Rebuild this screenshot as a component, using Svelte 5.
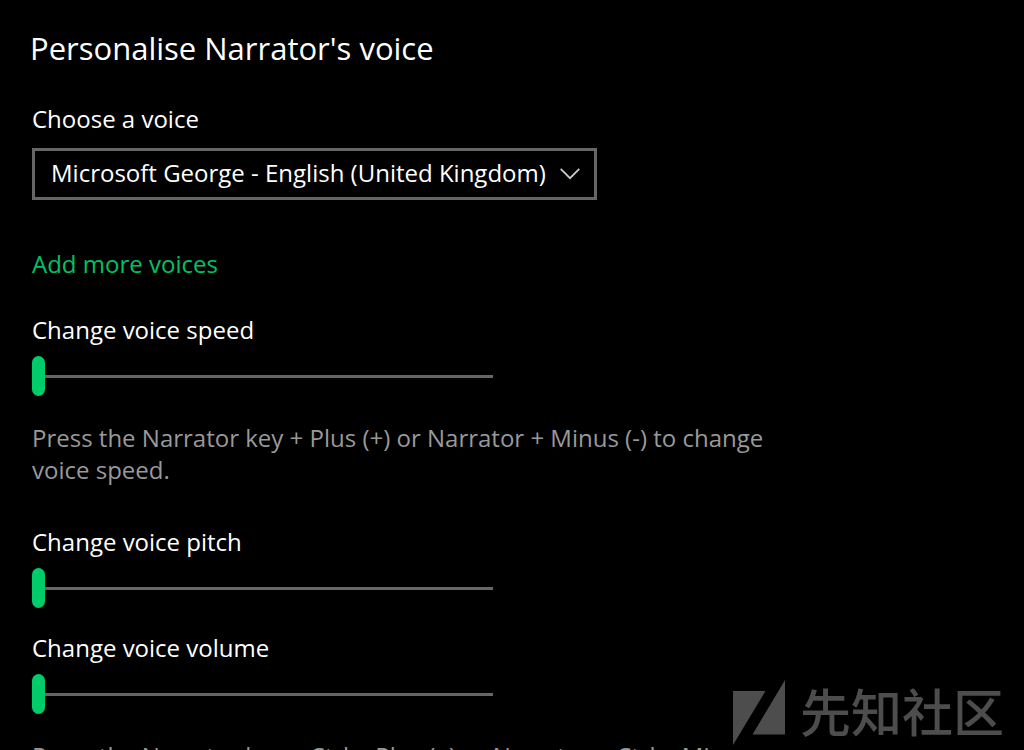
<script>
  const voices = ['Microsoft George - English (United Kingdom)'];
  let voice = $state(voices[0]);

  let sliders = $state([
    {
      id: 'speed',
      label: 'Change voice speed',
      value: 0,
      hint: 'Press the Narrator key + Plus (+) or Narrator + Minus (-) to change voice speed.'
    },
    { id: 'pitch', label: 'Change voice pitch', value: 0, hint: '' },
    {
      id: 'volume',
      label: 'Change voice volume',
      value: 0,
      hint: 'Press the Narrator key + Ctrl + Plus (+) or Narrator + Ctrl + Minus (-) to change voice volume.'
    }
  ]);
</script>

<main>
  <h1>Personalise Narrator's voice</h1>

  <div class="field">
    <label for="voice">Choose a voice</label>
    <div class="combo">
      <select id="voice" bind:value={voice}>
        {#each voices as name}
          <option>{name}</option>
        {/each}
      </select>
      <svg class="chevron" viewBox="0 0 20 12" aria-hidden="true">
        <path d="M0.7 0.8 L10 10.2 L19.3 0.8" />
      </svg>
    </div>
  </div>

  <a class="more" href="#voices">Add more voices</a>

  {#each sliders as s (s.id)}
    <section class="setting">
      <label for={s.id}>{s.label}</label>
      <input id={s.id} type="range" min="0" max="100" bind:value={s.value} />
      {#if s.hint}
        <p>{s.hint}</p>
      {/if}
    </section>
  {/each}
</main>

<div class="brand">
  <svg viewBox="0 0 52 65" aria-hidden="true">
    <path d="M0 11 H32.5 L0 65 Z M52 0 V54.5 H19.5 Z" />
  </svg>
  <span>先知社区</span>
</div>

<style>
  :global(body) {
    background: #000;
    overflow: hidden;
  }

  main {
    box-sizing: border-box;
    max-width: 808px;
    height: 100vh;
    overflow: hidden;
    padding: 26px 32px 0;
    color: #fff;
    font: 24px/32px 'Open Sans', 'Noto Sans', sans-serif;
  }

  h1 {
    margin: 0 0 33px -2px;
    font-size: 31px;
    line-height: 44px;
    font-weight: 400;
  }

  label {
    display: block;
    width: fit-content;
  }

  .combo {
    display: grid;
    align-items: center;
    max-width: 565px;
    margin-top: 13px;
  }

  select {
    grid-area: 1 / 1;
    width: 100%;
    height: 52px;
    padding: 0 48px 2px 16px;
    border: 3px solid #666;
    border-radius: 0;
    appearance: none;
    background: #000;
    color: inherit;
    font: inherit;
  }

  .chevron {
    grid-area: 1 / 1;
    justify-self: end;
    width: 20px;
    height: 12px;
    margin-right: 17px;
    pointer-events: none;
  }

  .chevron path {
    fill: none;
    stroke: #ccc;
    stroke-width: 1.7;
  }

  .more {
    display: block;
    width: fit-content;
    margin: 48px 0 34px;
    color: #00c265;
    text-decoration: none;
  }

  .setting {
    margin-bottom: 24px;
  }

  .setting:has(p) {
    margin-bottom: 40px;
  }

  input {
    display: block;
    width: 100%;
    max-width: 461px;
    height: 40px;
    margin: 10px 0 0;
    appearance: none;
    background: linear-gradient(#666, #666) center / 100% 3px no-repeat;
  }

  input::-webkit-slider-thumb {
    appearance: none;
    width: 13px;
    height: 40px;
    border-radius: 7px;
    background: #00cc6a;
  }

  p {
    margin: 26px 0 0;
    color: #999;
  }

  .brand {
    position: fixed;
    right: 20px;
    bottom: 5px;
    display: flex;
    align-items: center;
    gap: 15px;
    color: #4d4d4d;
    font: 500 51px/56px 'Noto Sans CJK SC', sans-serif;
  }

  .brand span {
    padding-bottom: 5px;
  }

  .brand svg {
    width: 52px;
    height: 65px;
    fill: currentColor;
  }
</style>
